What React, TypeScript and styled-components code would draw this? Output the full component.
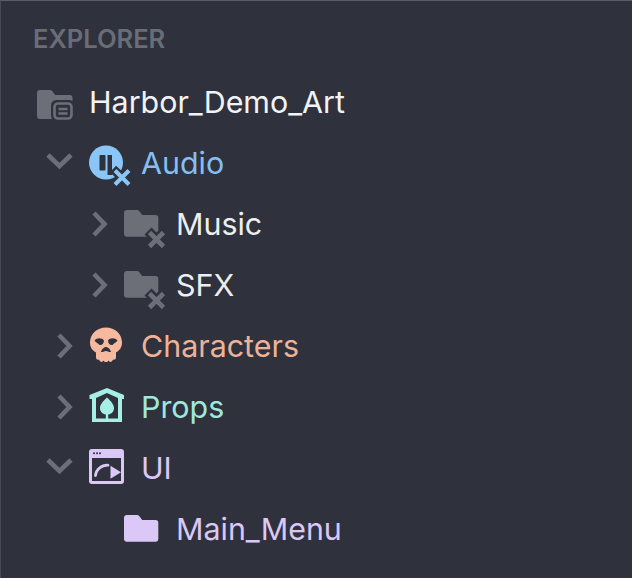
import React from 'react';
import styled, { createGlobalStyle } from 'styled-components';

const GlobalStyle = createGlobalStyle`
  html, body {
    margin: 0;
    padding: 0;
    background: #2f323c;
  }
`;

const Panel = styled.div`
  box-sizing: border-box;
  width: 632px;
  height: 578px;
  padding: 22px 0 0;
  background: #2f323c;
  border-top: 1px solid #5c5e66;
  border-left: 1px solid #4a4c55;
  font-family: Inter, "Noto Sans", sans-serif;
  overflow: hidden;
`;

const Heading = styled.div`
  margin: 0 0 18px 32px;
  height: 31px;
  line-height: 31px;
  font-size: 25.5px;
  font-weight: 600;
  color: #6a6d77;
`;

const Tree = styled.div`
  display: flex;
  flex-direction: column;
`;

const Row = styled.div<{ $indent: number }>`
  display: flex;
  align-items: center;
  height: 60.9px;
  padding-left: ${(p) => p.$indent}px;
`;

const ChevronBox = styled.svg`
  flex: none;
  width: 32px;
  height: 32px;
  margin-right: 13px;
  fill: none;
  stroke: #6c6e78;
  stroke-width: 4.6;
`;

const Spacer = styled.div`
  flex: none;
  width: 45px;
`;

const IconBox = styled.svg`
  flex: none;
  width: 36px;
  height: 36px;
  margin-right: 16px;
  overflow: visible;
`;

const Label = styled.span<{ $color: string }>`
  font-size: 30.4px;
  line-height: 36px;
  color: ${(p) => p.$color};
  white-space: nowrap;
`;

const BG = '#2f323c';
const GRAY = '#6c6e78';
const BLUE = '#8ac6f8';
const PEACH = '#f5b9a0';
const MINT = '#a6efe6';
const LILAC = '#dcc8f6';

const Chevron = ({ open }: { open: boolean }) => (
  <ChevronBox viewBox="0 0 32 32">
    <path d={open ? 'M4 8 L15.5 19 L27 8' : 'M15 5 L25.5 16 L15 27'} />
  </ChevronBox>
);

const FOLDER =
  'M0 7 a3 3 0 0 1 3 -3 h10 a3 3 0 0 1 2.2 1 l3 4 h13.3 a2.8 2.8 0 0 1 2.8 2.8 v15.9 a3 3 0 0 1 -3 3 h-28.3 a3 3 0 0 1 -3 -3 z';

const PlainFolder = ({ color }: { color: string }) => (
  <IconBox viewBox="0 0 36 36">
    <path d={FOLDER} fill={color} />
  </IconBox>
);

const ClosedFolder = () => (
  <IconBox viewBox="0 0 36 36">
    <path d={FOLDER} fill={GRAY} />
    <path d="M24 25 L41 42 M41 25 L24 42" stroke={BG} strokeWidth="10" />
    <path d="M25.5 26.5 L39.5 40.5 M39.5 26.5 L25.5 40.5" stroke={GRAY} strokeWidth="4.6" />
  </IconBox>
);

const RootIcon = () => (
  <IconBox viewBox="0 0 36 36">
    <path d="M0 9 a3 3 0 0 1 3 -3 h10 a3 3 0 0 1 2.2 1 l3 4 h14.3 a3 3 0 0 1 3 3 v18 a3 3 0 0 1 -3 3 h-29.5 a3 3 0 0 1 -3 -3 z" fill={GRAY} />
    <rect x="15.5" y="17.5" width="21" height="18" rx="4" fill={BG} stroke={BG} strokeWidth="3" />
    <rect x="17.5" y="19.5" width="17" height="15" rx="3.5" fill="none" stroke={GRAY} strokeWidth="2.6" />
    <path d="M21.5 25 h9 M21.5 29.5 h9" stroke={GRAY} strokeWidth="2.4" />
  </IconBox>
);

const AudioIcon = () => (
  <IconBox viewBox="0 0 36 36">
    <circle cx="17" cy="17.5" r="17" fill={BLUE} />
    <rect x="10.5" y="10" width="6" height="15.5" rx="1" fill={BG} />
    <rect x="18.5" y="10" width="4.5" height="20" fill={BG} />
    <path d="M24 24 L42 41 M42 24 L24 41" stroke={BG} strokeWidth="9" />
    <path d="M26 25.5 L40 39.5 M40 25.5 L26 39.5" stroke={BLUE} strokeWidth="4" />
  </IconBox>
);

const SkullIcon = () => (
  <IconBox viewBox="0 0 36 36">
    <path
      d="M17 -0.5 C26 -0.5 33 6 33 14.5 C33 19.5 30.5 22.5 27 24.5 L27 29 C27 32 25 32 24 31.5 C23 34.5 20.5 34.5 19.5 32.5 C18.5 34.5 15.5 34.5 14.5 32.5 C13.5 34.5 11 34.5 10 31.5 C9 32 7 32 7 29 L7 24.5 C3.5 22.5 1 19.5 1 14.5 C1 6 8 -0.5 17 -0.5 Z"
      fill={PEACH}
    />
    <path d="M5.5 12.5 C8 9.5 13 9.5 15 12.5 C15 15.5 13 17.5 10.5 17 C9 15 6.5 14.5 5.5 12.5 Z" fill={BG} />
    <path d="M28.5 12.5 C26 9.5 21 9.5 19 12.5 C19 15.5 21 17.5 23.5 17 C25 15 27.5 14.5 28.5 12.5 Z" fill={BG} />
    <path d="M17 19 C19 19 21.5 21.5 22 24 C20.5 24.5 18.5 23 17 23 C15.5 23 13.5 24.5 12 24 C12.5 21.5 15 19 17 19 Z" fill={BG} />
  </IconBox>
);

const PropsIcon = () => (
  <IconBox viewBox="0 0 36 36">
    <path
      d="M18 -1 L35 6 V10 H33 V33 H3 V10 H0.5 V6 Z M18 4 L7 9 V29.5 H16.8 V25.5 C13.5 25 11 22.5 11 19 C11 15.5 14.5 11.5 18 8.5 C21.5 11.5 25 15.5 25 19 C25 22.5 22.5 25 19.2 25.5 V29.5 H29 V9 Z"
      fill={MINT}
      fillRule="evenodd"
    />
  </IconBox>
);

const UiIcon = () => (
  <IconBox viewBox="0 0 36 36">
    <rect x="0" y="-1" width="35" height="35" rx="3" fill={LILAC} />
    <rect x="3" y="8" width="29" height="23" fill={BG} />
    <circle cx="5" cy="3.3" r="1" fill={BG} />
    <circle cx="8" cy="3.3" r="1" fill={BG} />
    <circle cx="11" cy="3.3" r="1" fill={BG} />
    <path d="M6.5 25.5 C7 19.5 12.5 15 19 15.2" fill="none" stroke={LILAC} strokeWidth="2.8" strokeLinecap="round" />
    <path d="M21.5 15.8 L32 22.3 L21.5 28.8 Z" fill={LILAC} />
  </IconBox>
);

export default function App() {
  return (
    <>
      <GlobalStyle />
      <Panel>
        <Heading>EXPLORER</Heading>
        <Tree>
          <Row $indent={36}>
            <RootIcon />
            <Label $color="#f2f3f5">Harbor_Demo_Art</Label>
          </Row>
          <Row $indent={43}>
            <Chevron open />
            <AudioIcon />
            <Label $color="#84bff2">Audio</Label>
          </Row>
          <Row $indent={78}>
            <Chevron open={false} />
            <ClosedFolder />
            <Label $color="#eceef0">Music</Label>
          </Row>
          <Row $indent={78}>
            <Chevron open={false} />
            <ClosedFolder />
            <Label $color="#eceef0">SFX</Label>
          </Row>
          <Row $indent={43}>
            <Chevron open={false} />
            <SkullIcon />
            <Label $color="#eeb298">Characters</Label>
          </Row>
          <Row $indent={43}>
            <Chevron open={false} />
            <PropsIcon />
            <Label $color="#a0e8de">Props</Label>
          </Row>
          <Row $indent={43}>
            <Chevron open />
            <UiIcon />
            <Label $color={LILAC}>UI</Label>
          </Row>
          <Row $indent={78}>
            <Spacer />
            <PlainFolder color={LILAC} />
            <Label $color={LILAC}>Main_Menu</Label>
          </Row>
        </Tree>
      </Panel>
    </>
  );
}
